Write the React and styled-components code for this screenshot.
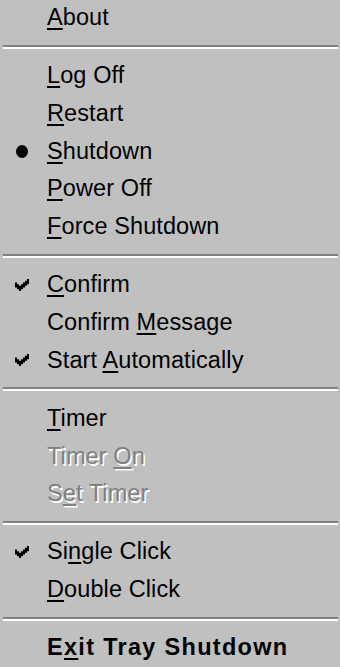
import styled, { createGlobalStyle } from 'styled-components';

const GlobalStyle = createGlobalStyle`
	html, body {
		margin: 0;
		padding: 0;
		background: #c0c0c0;
	}
	body {
		font-family: "Liberation Sans", Arial, sans-serif;
		-webkit-font-smoothing: antialiased;
	}
`;

const Menu = styled.div`
	width: 340px;
	height: 667px;
	overflow: hidden;
	background: #c0c0c0;
	display: flex;
	flex-direction: column;
	margin-top: -1px;
`;

const Item = styled.div`
	height: 37.75px;
	flex: none;
	display: grid;
	grid-template-columns: 47px 1fr;
	align-items: center;
	font-size: 23.5px;
	letter-spacing: ${p => (p.bold ? '1.3px' : '0.1px')};
	font-weight: ${p => (p.bold ? 700 : 400)};
	color: ${p => (p.disabled ? '#808080' : '#000')};
	text-shadow: ${p => (p.disabled ? '1.5px 1.5px 0 #fff' : 'none')};
	white-space: nowrap;
	line-height: 1;
`;

const Mark = styled.span`
	display: flex;
	justify-content: center;
	align-items: center;
	padding-right: 3px;
`;

const Label = styled.span`
	u {
		text-decoration: underline;
		text-decoration-thickness: 2px;
		text-underline-offset: 3px;
		text-decoration-skip-ink: none;
	}
`;

const Bullet = styled.span`
	width: 12px;
	height: 13px;
	border-radius: 50%;
	background: #000;
`;

const Separator = styled.div`
	height: 20.3px;
	flex: none;
	display: flex;
	align-items: center;
	padding: 0 2px 0 3px;

	&::after {
		content: '';
		flex: 1;
		height: 4px;
		box-sizing: border-box;
		border-top: 2px solid #808080;
		border-bottom: 2px solid #fff;
	}
`;

const Check = () => (
	<svg width="14" height="12" viewBox="0 0 7 7" preserveAspectRatio="none">
		<path
			fill="#000"
			d="M6 0h1v1h-1z M5 1h2v1h-2z M0 2h1v1h-1z M4 2h3v1h-3z M0 3h2v1h-2z M3 3h3v1h-3z M0 4h5v1h-5z M1 5h3v1h-3z M2 6h1v1h-1z"
		/>
	</svg>
);

// label parts: [before, underlined, after]
const menu = [
	{ text: ['', 'A', 'bout'] },
	'sep',
	{ text: ['', 'L', 'og Off'] },
	{ text: ['', 'R', 'estart'] },
	{ text: ['', 'S', 'hutdown'], mark: 'bullet' },
	{ text: ['', 'P', 'ower Off'] },
	{ text: ['', 'F', 'orce Shutdown'] },
	'sep',
	{ text: ['', 'C', 'onfirm'], mark: 'check' },
	{ text: ['Confirm ', 'M', 'essage'] },
	{ text: ['Start ', 'A', 'utomatically'], mark: 'check' },
	'sep',
	{ text: ['', 'T', 'imer'] },
	{ text: ['Timer ', 'O', 'n'], disabled: true },
	{ text: ['S', 'e', 't Timer'], disabled: true },
	'sep',
	{ text: ['Si', 'n', 'gle Click'], mark: 'check' },
	{ text: ['', 'D', 'ouble Click'] },
	'sep',
	{ text: ['E', 'x', 'it Tray Shutdown'], bold: true },
];

const App = () => (
	<>
		<GlobalStyle />
		<Menu>
			{menu.map((entry, i) =>
				entry === 'sep' ? (
					<Separator key={i} />
				) : (
					<Item key={i} disabled={entry.disabled} bold={entry.bold}>
						<Mark>
							{entry.mark === 'check' && <Check />}
							{entry.mark === 'bullet' && <Bullet />}
						</Mark>
						<Label>
							{entry.text[0]}
							<u>{entry.text[1]}</u>
							{entry.text[2]}
						</Label>
					</Item>
				)
			)}
		</Menu>
	</>
);

export default App;
